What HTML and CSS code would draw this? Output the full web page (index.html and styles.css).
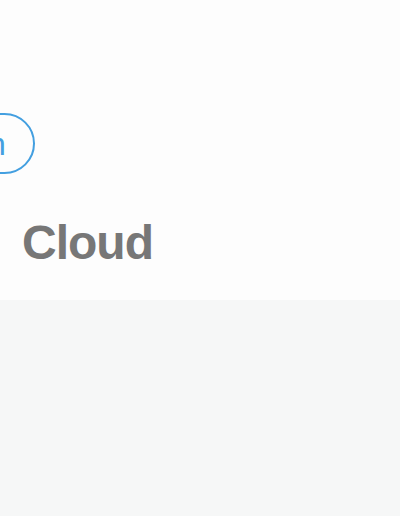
FILE: index.html
```html
<!DOCTYPE html>
<html lang="en">
<head>
    <meta charset="UTF-8" />
    <meta name="viewport" content="width=device-width, initial-scale=1" />
    <title>Cloud</title>
    <link rel="stylesheet" href="styles.css">
</head>
<body>
    <header class="top">
        <div class="actions">
            <button type="button" class="pill">Sign in</button>
        </div>
        <h1 class="title">Cloud</h1>
    </header>
    <main class="content"></main>
</body>
</html>
```

FILE: styles.css
```css
body {
    margin: 0;
    font-family: "Liberation Sans", Arial, sans-serif;
    background: #f6f7f7;
    overflow: hidden;
}

.top {
    background: #fdfdfd;
    height: 300px;
    box-sizing: border-box;
    padding-top: 113px;
    box-shadow: 0 3px 12px rgba(0,0,0,0.14);
}

.actions {
    display: flex;
}

.pill {
    margin-left: -121px;
    height: 61px;
    padding: 2px 27px 0;
    border: 2px solid #439fe0;
    border-radius: 31px;
    background: transparent;
    color: #439fe0;
    font-family: inherit;
    font-size: 32px;
    line-height: 55px;
}

.title {
    margin: 41px 0 0 22px;
    font-size: 48px;
    line-height: 56px;
    font-weight: bold;
    color: #777;
    letter-spacing: -1px;
}
```
